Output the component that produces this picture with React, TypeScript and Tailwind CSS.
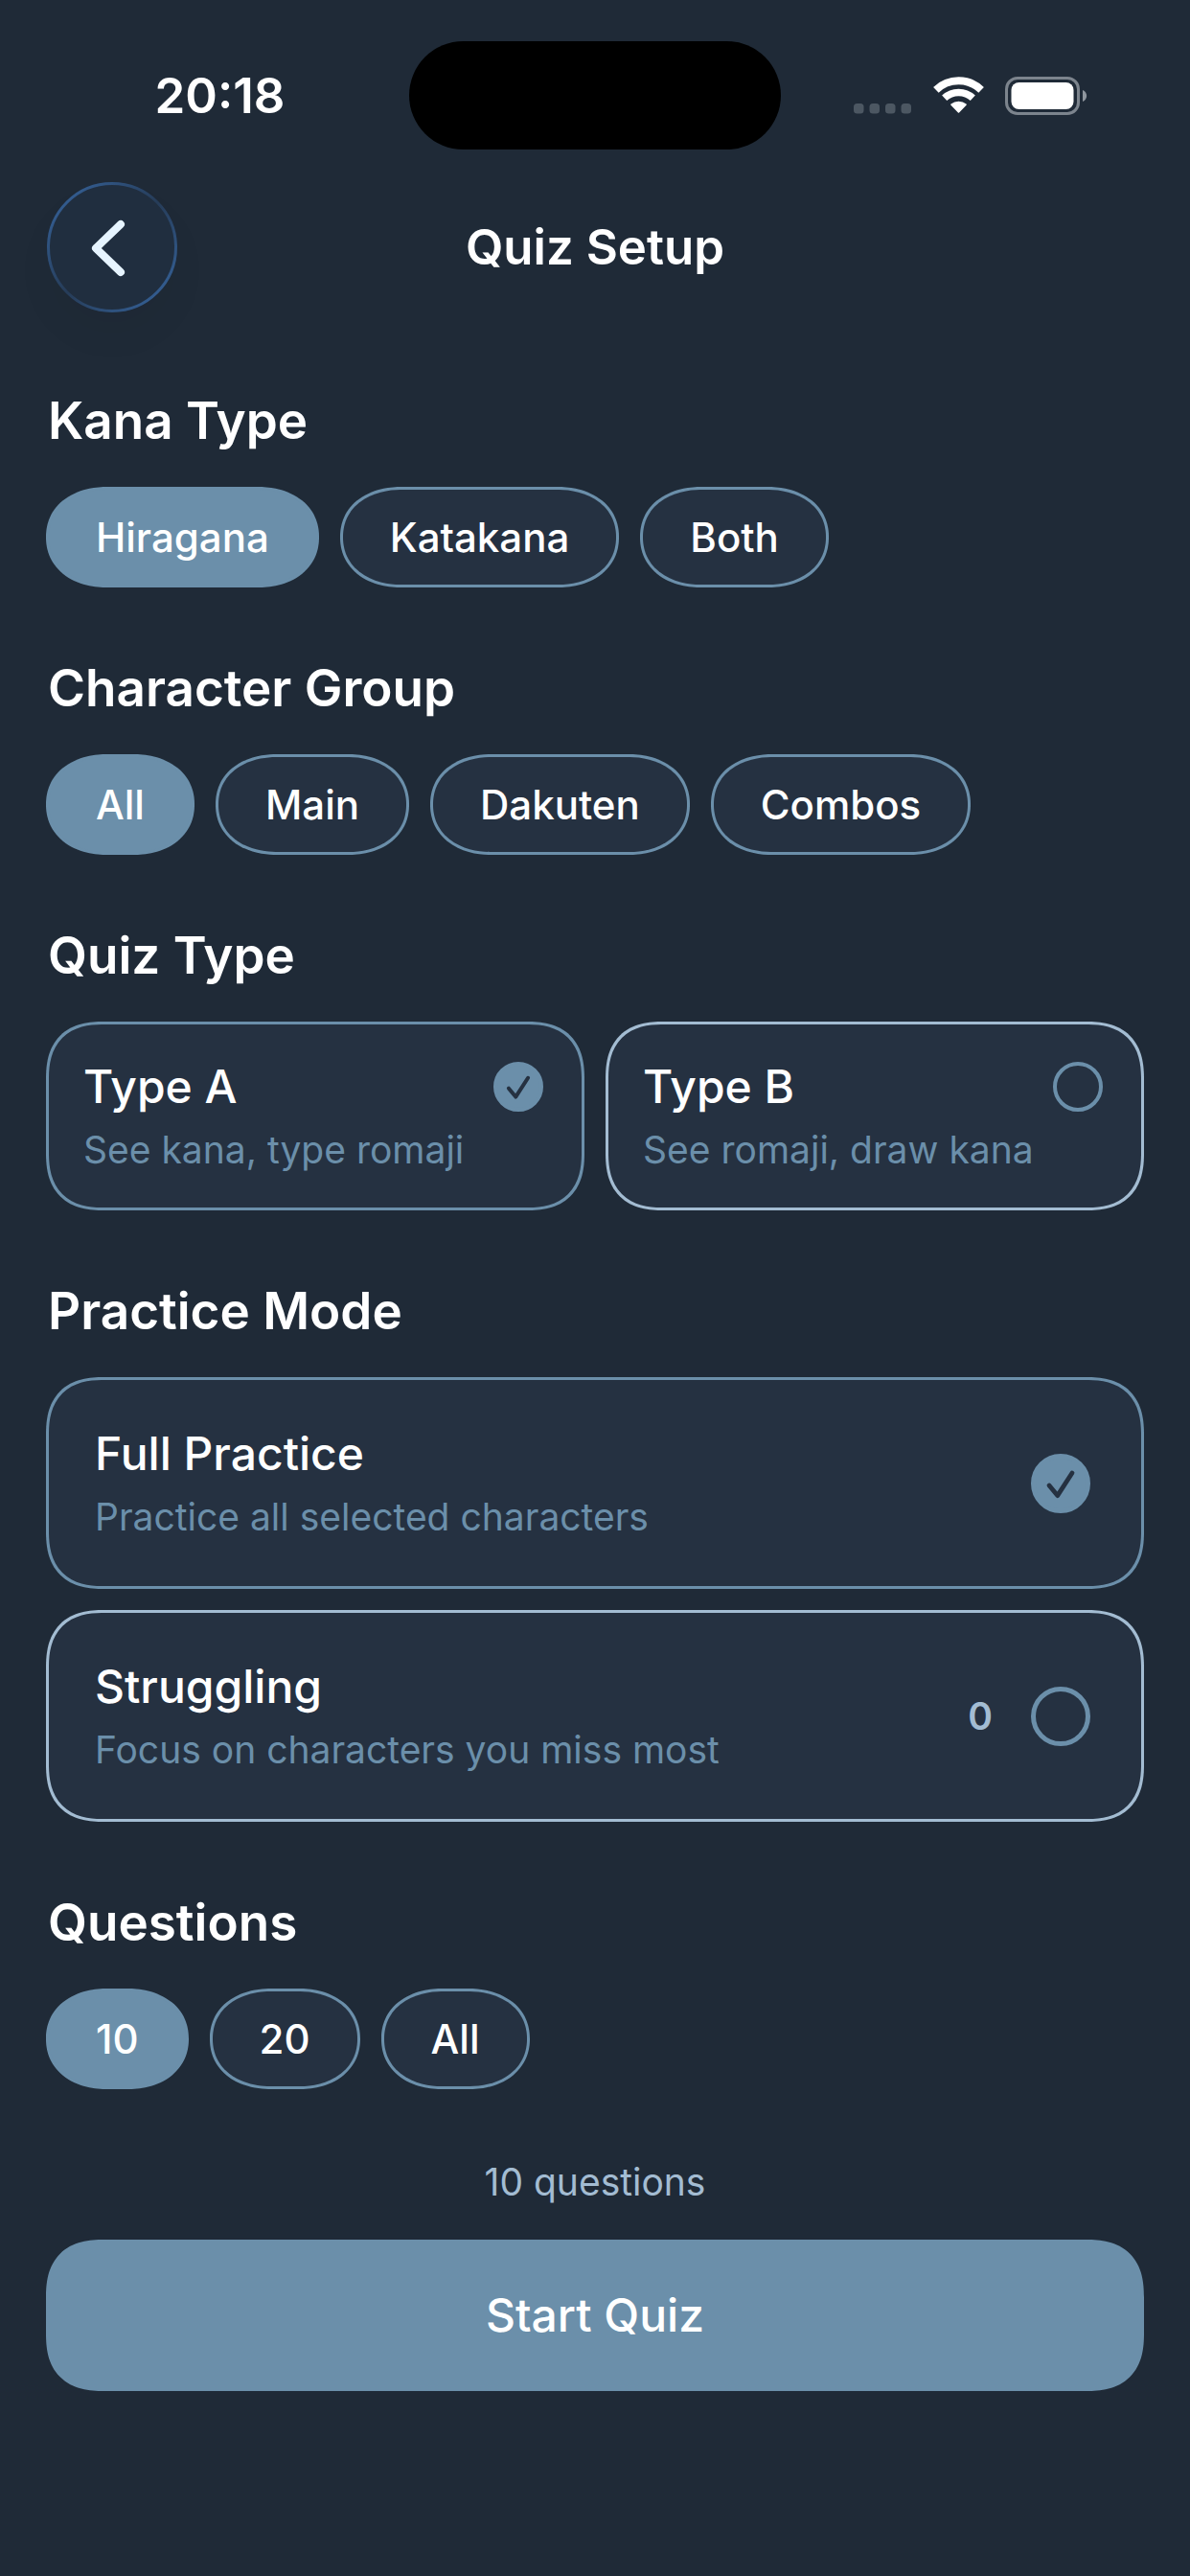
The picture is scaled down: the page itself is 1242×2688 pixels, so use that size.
import { ReactNode, useState } from 'react'

type Choice = {
  value: string
  label: string
}

type CardChoice = Choice & {
  description: string
  count?: number
}

const KANA_TYPES: Choice[] = [
  { value: 'hiragana', label: 'Hiragana' },
  { value: 'katakana', label: 'Katakana' },
  { value: 'both', label: 'Both' },
]

const CHARACTER_GROUPS: Choice[] = [
  { value: 'all', label: 'All' },
  { value: 'main', label: 'Main' },
  { value: 'dakuten', label: 'Dakuten' },
  { value: 'combos', label: 'Combos' },
]

const QUIZ_TYPES: CardChoice[] = [
  { value: 'type-a', label: 'Type A', description: 'See kana, type romaji' },
  { value: 'type-b', label: 'Type B', description: 'See romaji, draw kana' },
]

const PRACTICE_MODES: CardChoice[] = [
  { value: 'full', label: 'Full Practice', description: 'Practice all selected characters' },
  { value: 'struggling', label: 'Struggling', description: 'Focus on characters you miss most', count: 0 },
]

const QUESTION_COUNTS: Choice[] = [
  { value: '10', label: '10' },
  { value: '20', label: '20' },
  { value: 'all', label: 'All' },
]

function StatusBar() {
  return (
    <div className="grid grid-cols-[1fr_388px_1fr] items-center pt-[43px]">
      <div className="pl-8 text-center text-[51px] leading-[58px] font-semibold">20:18</div>
      <div className="h-[113px] rounded-full bg-black" />
      <div className="flex items-center justify-center gap-[22px] pr-8">
        <svg width="61" height="39" viewBox="0 0 61 39" fill="#4c5762" aria-hidden="true">
          <rect x="0" y="28" width="10.5" height="10.5" rx="3.5" />
          <rect x="16.5" y="28" width="10.5" height="10.5" rx="3.5" />
          <rect x="33" y="28" width="10.5" height="10.5" rx="3.5" />
          <rect x="49.5" y="28" width="10.5" height="10.5" rx="3.5" />
        </svg>
        <svg width="53" height="39" viewBox="0 0 53 39" fill="none" stroke="#fff" aria-hidden="true">
          <path d="M2.9 13.8a34 34 0 0 1 47.2 0" strokeWidth="8" />
          <path d="M11.7 22.3a21.7 21.7 0 0 1 29.6 0" strokeWidth="7.5" />
          <path d="M19 29.2a11.6 11.6 0 0 1 15 0l-7.5 7.8z" fill="#fff" strokeWidth="1.6" strokeLinejoin="round" />
        </svg>
        <svg width="86" height="40" viewBox="0 0 86 40" aria-hidden="true">
          <rect x="1.5" y="1.5" width="75" height="37" rx="11.5" fill="none" stroke="#7c848d" strokeWidth="3" />
          <rect x="6.5" y="6" width="65" height="28" rx="8" fill="#fff" />
          <path d="M81 14c5.5 2 5.5 10 0 12z" fill="#8f969e" />
        </svg>
      </div>
    </div>
  )
}

function BackButton() {
  return (
    <button
      type="button"
      aria-label="Back"
      className="size-[136px] rounded-full bg-[#202e3f] shadow-[0_24px_40px_rgba(0,0,0,0.04)]"
    >
      <svg viewBox="0 0 136 136" fill="none" aria-hidden="true">
        <defs>
          <linearGradient id="rim" x1="0" y1="0" x2="1" y2="1">
            <stop offset="0.15" stopColor="#325a8c" />
            <stop offset="0.5" stopColor="#263c58" />
            <stop offset="0.85" stopColor="#325a8c" />
          </linearGradient>
        </defs>
        <circle cx="68" cy="68" r="66.5" stroke="url(#rim)" strokeWidth="3" />
        <path d="M77 44 51 69l26 25" stroke="#e6f4ff" strokeWidth="8" strokeLinecap="round" strokeLinejoin="round" />
      </svg>
    </button>
  )
}

function Section({ id, title, children }: { id: string; title: string; children: ReactNode }) {
  return (
    <section role="radiogroup" aria-labelledby={id} className="flex flex-col gap-[37px]">
      <h2 id={id} className="px-0.5 text-[53px] leading-[64px] font-semibold">
        {title}
      </h2>
      {children}
    </section>
  )
}

type PickerProps<T> = {
  name: string
  options: T[]
  value: string
  onChange: (value: string) => void
}

function Pills({ name, options, value, onChange }: PickerProps<Choice>) {
  return (
    <div className="flex flex-wrap gap-[22px]">
      {options.map((option) => (
        <label
          key={option.value}
          className="flex h-[105px] cursor-pointer items-center rounded-[64px/52px] border-3 border-[#6b8faa] bg-[#253141] px-[49px] text-[42px] leading-[50px] font-medium [corner-shape:superellipse(1.1)] has-checked:bg-[#6b8faa]"
        >
          <input
            type="radio"
            name={name}
            value={option.value}
            checked={value === option.value}
            onChange={() => onChange(option.value)}
            className="sr-only"
          />
          {option.label}
        </label>
      ))}
    </div>
  )
}

type RadioDotProps = {
  id: string
  name: string
  checked: boolean
  large?: boolean
  onChange: () => void
}

function RadioDot({ id, name, checked, large, onChange }: RadioDotProps) {
  return (
    <span className={`grid shrink-0 ${large ? 'size-[62px]' : 'size-[52px]'}`}>
      <input
        id={id}
        type="radio"
        name={name}
        checked={checked}
        onChange={onChange}
        className={`col-start-1 row-start-1 size-full appearance-none rounded-full border-[#6b8faa] checked:bg-[#6b8faa] ${
          large ? 'border-5' : 'border-4'
        }`}
      />
      {checked && (
        <svg viewBox="0 0 62 62" fill="none" className="pointer-events-none col-start-1 row-start-1" aria-hidden="true">
          <path
            d="M19 33l8.7 10.6L43 20"
            stroke="#253141"
            strokeWidth="4.8"
            strokeLinecap="round"
            strokeLinejoin="round"
          />
        </svg>
      )}
    </span>
  )
}

const CARD =
  'cursor-pointer rounded-[60px] border-3 border-[#a3bcd2] bg-[#253141] [corner-shape:superellipse(1.3)] has-checked:border-[#6b8faa]'

function App() {
  const [kanaType, setKanaType] = useState('hiragana')
  const [group, setGroup] = useState('all')
  const [quizType, setQuizType] = useState('type-a')
  const [mode, setMode] = useState('full')
  const [questions, setQuestions] = useState('10')

  return (
    <div className="min-h-screen bg-[#1f2a37] font-[Inter,sans-serif] text-white">
      <StatusBar />

      <header className="grid grid-cols-[136px_1fr_136px] items-center px-[49px] pt-[34px]">
        <BackButton />
        <h1 className="text-center text-[51px] leading-[58px] font-semibold">Quiz Setup</h1>
      </header>

      <main className="flex flex-col gap-[73px] px-12 pt-[81px] pb-48">
        <Section id="kana-type" title="Kana Type">
          <Pills name="kana-type" options={KANA_TYPES} value={kanaType} onChange={setKanaType} />
        </Section>

        <Section id="character-group" title="Character Group">
          <Pills name="character-group" options={CHARACTER_GROUPS} value={group} onChange={setGroup} />
        </Section>

        <Section id="quiz-type" title="Quiz Type">
          <div className="grid grid-cols-2 gap-[22px]">
            {QUIZ_TYPES.map((type) => (
              <label key={type.value} htmlFor={type.value} className={`${CARD} py-9 pr-10 pl-9`}>
                <span className="flex h-[58px] items-center justify-between">
                  <span className="text-[48px] leading-[58px] font-medium">{type.label}</span>
                  <RadioDot
                    id={type.value}
                    name="quiz-type"
                    checked={quizType === type.value}
                    onChange={() => setQuizType(type.value)}
                  />
                </span>
                <span className="mt-[13px] block text-[39px] leading-[48px] text-[#6b8faa]">{type.description}</span>
              </label>
            ))}
          </div>
        </Section>

        <Section id="practice-mode" title="Practice Mode">
          <div className="flex flex-col gap-[22px]">
            {PRACTICE_MODES.map((item) => (
              <label key={item.value} htmlFor={item.value} className={`${CARD} flex items-center gap-10 py-12 pr-[53px] pl-12`}>
                <span className="flex-1">
                  <span className="block text-[48px] leading-[58px] font-medium">{item.label}</span>
                  <span className="mt-[13px] block text-[39px] leading-[48px] text-[#6b8faa]">{item.description}</span>
                </span>
                {item.count !== undefined && (
                  <span className="text-[39px] leading-[48px] font-semibold text-[#a3bcd2]">{item.count}</span>
                )}
                <RadioDot
                  id={item.value}
                  name="practice-mode"
                  large
                  checked={mode === item.value}
                  onChange={() => setMode(item.value)}
                />
              </label>
            ))}
          </div>
        </Section>

        <Section id="questions" title="Questions">
          <Pills name="questions" options={QUESTION_COUNTS} value={questions} onChange={setQuestions} />
        </Section>

        <div className="flex flex-col gap-9">
          <p className="text-center text-[39px] leading-[48px] text-[#a3bcd2]">
            {questions === 'all' ? 'All' : questions} questions
          </p>
          <button
            type="button"
            className="h-[158px] rounded-[60px] bg-[#6b8faa] text-[48px] leading-[58px] font-medium [corner-shape:superellipse(1.3)]"
          >
            Start Quiz
          </button>
        </div>
      </main>
    </div>
  )
}

export default App
